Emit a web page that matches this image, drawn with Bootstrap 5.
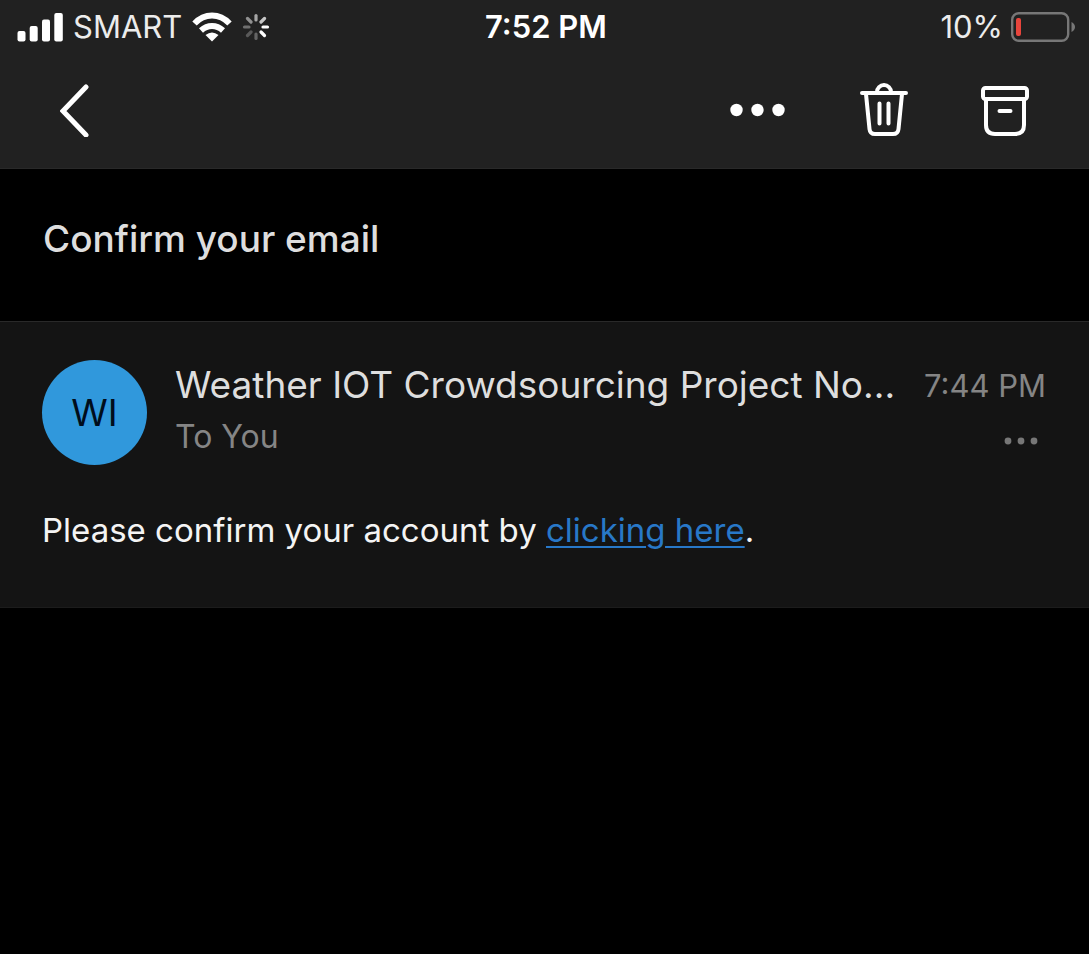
<!DOCTYPE html>
<html lang="en" data-bs-theme="dark">
<head>
<meta charset="utf-8">
<meta name="viewport" content="width=device-width, initial-scale=1">
<title>Confirm your email</title>
<link href="https://cdn.jsdelivr.net/npm/bootstrap@5.3.0/dist/css/bootstrap.min.css" rel="stylesheet">
<style>
  body { background: #000; color: #dedede; font-family: Inter, "Liberation Sans", sans-serif; }
  svg { display: block; flex: none; }
  .top-area { background: #212121; border-bottom: 1px solid #292929; }
  .status-bar { height: 54px; padding: 0 14px 0 17px; font-size: 31px; line-height: 54px; color: #ececec; }
  .status-side { flex: 1 1 0; }
  .carrier { margin: 0 10px; }
  .clock { font-weight: 600; color: #fff; }
  .toolbar-row { height: 114px; padding: 0 60px 2px; color: #fff; }
  .tool-btn { padding: 0; border: 0; background: none; color: inherit; }
  .tool-group { gap: 72px; }
  .subject { padding: 47px 43px; font-size: 37px; line-height: 46px; height: 152px; font-weight: 500; color: #dedede; }
  .message { background: #141414; border-top: 1px solid #292929; border-bottom: 1px solid #1c1c1c; padding: 38px 43px 56px 42px; }
  .avatar { width: 105px; height: 105px; flex: none; background: #3098dc; color: #000d1c; font-size: 37px; }
  .sender { font-size: 37px; line-height: 50px; }
  .meta { font-size: 32px; line-height: 50px; color: #858585; }
  .sent-at { font-size: 31px; line-height: 52px; color: #858585; }
  .msg-text { font-size: 33px; line-height: 42px; margin-top: 44px; color: #f4f4f4; }
  .msg-text a { color: #2878c8; text-decoration-thickness: 2px; text-underline-offset: 4px; }
</style>
</head>
<body>
<header class="top-area">
  <div class="status-bar d-flex align-items-center">
    <div class="status-side d-flex align-items-center">
      <svg width="46" height="29" viewBox="0 0 46 29" fill="#fff" aria-hidden="true"><rect x=".5" y="18" width="8" height="10.500" rx="2"/><rect x="12.700" y="13" width="8" height="15.500" rx="2"/><rect x="25" y="6.500" width="8" height="22" rx="2"/><rect x="37.300" y="0" width="8.500" height="28.500" rx="2"/></svg>
      <span class="carrier">SMART</span>
      <svg width="40" height="30" viewBox="0 0 40 30" aria-hidden="true"><g fill="none" stroke="#fff" stroke-width="6"><path d="M2.500 11.500Q10 3.500 20 3.500T37.500 11.500"/><path d="M9 18.500Q14 14 20 14T31 18.500"/></g><path d="M13.500 23q6.500-5 13 0L20 29.500z" fill="#fff"/></svg>
      <svg class="ms-2" width="32" height="28" viewBox="-16 -14 32 28" stroke="#fff" stroke-width="3.200" stroke-linecap="round" aria-hidden="true"><path d="M7 0h4.500" /><path d="M5 5l3.500 3.500"/><path d="M0 7v4.500" opacity=".3"/><path d="M-5 5l-3.500 3.500" opacity=".25"/><path d="M-7 0h-4.500" opacity=".35"/><path d="M-5-5l-3.500-3.500" opacity=".5"/><path d="M0-7v-4.500" opacity=".6"/><path d="M5-5l3.500-3.500" opacity=".75"/></svg>
    </div>
    <div class="clock">7:52 PM</div>
    <div class="status-side d-flex align-items-center justify-content-end gap-2">
      <span>10%</span>
      <svg width="64" height="30" viewBox="0 0 64 30" aria-hidden="true"><rect x="1.200" y="1.200" width="56" height="27.600" rx="6.500" fill="none" stroke="#777" stroke-width="2.400"/><rect x="5" y="6" width="5" height="18" rx="2" fill="#e8453c"/><path d="M60.500 10q3.500 2 3.500 5t-3.500 5z" fill="#777"/></svg>
    </div>
  </div>
  <nav class="toolbar-row d-flex align-items-center justify-content-between">
    <button class="tool-btn" type="button" aria-label="Back"><svg width="30" height="54" viewBox="0 0 30 54" fill="none" stroke="#fff" stroke-width="5" stroke-linecap="round"><path d="M26 4 3 28l23 24"/></svg></button>
    <div class="tool-group d-flex align-items-center">
      <button class="tool-btn" type="button" aria-label="More actions"><svg width="58" height="14" viewBox="0 0 58 14" fill="#fff"><circle cx="7.500" cy="7" r="6.200"/><circle cx="28.500" cy="7" r="6.200"/><circle cx="49.500" cy="7" r="6.200"/></svg></button>
      <button class="tool-btn" type="button" aria-label="Delete"><svg width="50" height="56" viewBox="0 0 50 56" fill="none" stroke="#fff" stroke-width="4" stroke-linecap="round"><path d="M3 11h44M18 10a7 7 0 0 1 14 0M7 12l3.500 35q.5 5 5.500 5h18q5 0 5.500-5L43 12M20.500 21.500v20M29.500 21.500v20"/></svg></button>
      <button class="tool-btn" type="button" aria-label="Archive"><svg width="48" height="52" viewBox="0 0 48 52" fill="none" stroke="#fff" stroke-width="4" stroke-linecap="round"><rect x="2" y="4" width="44" height="11" rx="2.500"/><path d="M5 15v26q0 9 9 9h20q9 0 9-9V15M18.500 27h11"/></svg></button>
    </div>
  </nav>
</header>
<main>
  <h1 class="subject m-0">Confirm your email</h1>
  <article class="message">
    <div class="d-flex">
      <div class="avatar rounded-circle d-flex align-items-center justify-content-center">WI</div>
      <div class="flex-grow-1 overflow-hidden ms-4 ps-1">
        <div class="d-flex justify-content-between">
          <div class="sender text-truncate">Weather IOT Crowdsourcing Project No...</div>
          <time class="sent-at flex-shrink-0">7:44 PM</time>
        </div>
        <div class="meta d-flex justify-content-between align-items-center">
          <span>To You</span>
          <button class="tool-btn me-2 pt-2" type="button" aria-label="Message options"><svg width="34" height="8" viewBox="0 0 34 8" fill="#777"><circle cx="4" cy="4" r="3.400"/><circle cx="17" cy="4" r="3.400"/><circle cx="30" cy="4" r="3.400"/></svg></button>
        </div>
      </div>
    </div>
    <p class="msg-text mb-0">Please confirm your account by <a href="#">clicking here</a>.</p>
  </article>
</main>
<script src="https://cdn.jsdelivr.net/npm/bootstrap@5.3.0/dist/js/bootstrap.bundle.min.js"></script>
</body>
</html>
